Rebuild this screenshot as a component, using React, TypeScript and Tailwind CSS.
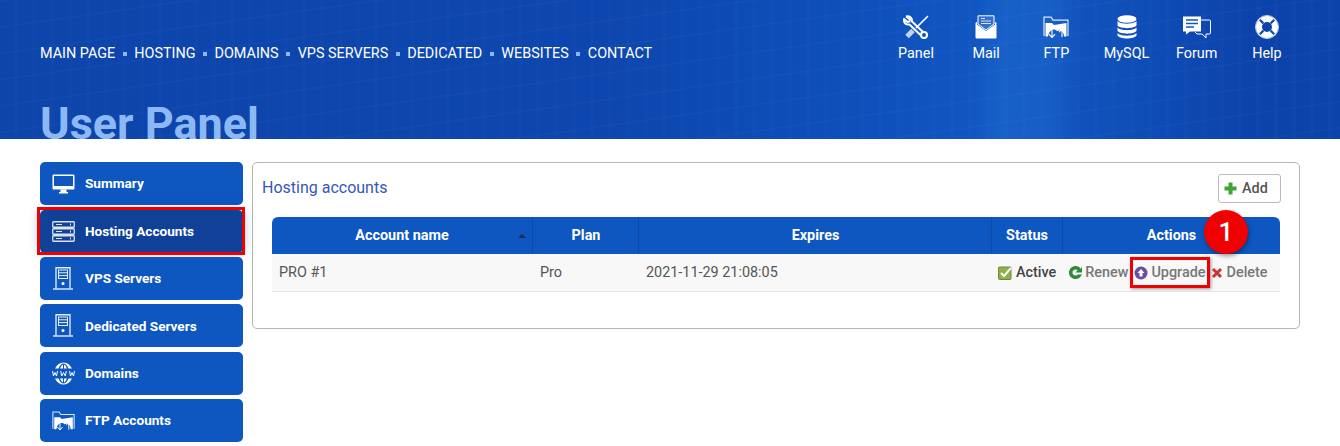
import React from 'react';

const NAV = ['MAIN PAGE', 'HOSTING', 'DOMAINS', 'VPS SERVERS', 'DEDICATED', 'WEBSITES', 'CONTACT'];

const ToolsIcon = () => (
  <svg width="26" height="24" viewBox="0 0 26 24" fill="none" stroke="white">
    <path d="M3 1.5 L7 4.5 L6.5 6.5 L4.5 7 L1 4 C0.5 8 3 10 6.5 9.5 L18 20.5" strokeWidth="2" strokeLinejoin="round" />
    <path d="M3 1.5 C6 0.5 9.5 2.5 9 6.5 L20 17" strokeWidth="2" strokeLinejoin="round" />
    <circle cx="21" cy="20" r="3" strokeWidth="2" />
    <path d="M25 1 L22.5 3.5 M22.5 3.5 L13 13" strokeWidth="1.6" />
    <path d="M10 15.5 L4 21.5" strokeWidth="5" strokeOpacity="0.75" />
  </svg>
);

const MailIcon = () => (
  <svg width="24" height="24" viewBox="0 0 24 24" fill="white">
    <path d="M4 9 V0.8 H20 V9 L12 15 Z" fill="white" fillOpacity="0.12" stroke="white" strokeWidth="1" />
    <path d="M7 3.5 H11 M7 6 H17 M7 8.5 H17" stroke="white" strokeOpacity="0.8" strokeWidth="1" />
    <path d="M1.5 8 L3 6.8 V9.5 L12 16 L21 9.5 V6.8 L22.5 8 V22.5 C22.5 23 22 23.5 21.5 23.5 H2.5 C2 23.5 1.5 23 1.5 22.5 Z" />
  </svg>
);

const FolderIcon = ({ size = 26 }: { size?: number }) => (
  <svg width={size} height={size * 0.85} viewBox="0 0 26 22" fill="none" stroke="white">
    <path d="M1 20 V1 H8 L10 4 H25 V20" strokeWidth="1.2" strokeOpacity="0.85" />
    <path d="M2.5 20.5 V7 H9 L11 9 L23.5 7 V20.5 H21 C21 16 18 13 14 15 C12 12 6 13 5 20.5 Z" fill="white" stroke="none" />
    <path d="M9 13 V21 M6 18 L9 21.5 L12 18" stroke="white" strokeWidth="1.1" />
    <path d="M19 21 V13 M16 16 L19 13 L22 16" stroke="white" strokeWidth="1.1" />
  </svg>
);

const DatabaseIcon = () => (
  <svg width="20" height="24" viewBox="0 0 20 24" fill="white">
    <ellipse cx="10" cy="4" rx="9.5" ry="3.8" />
    <path d="M0.5 6 C3 9.5 17 9.5 19.5 6 V10.5 C17 14 3 14 0.5 10.5 Z" />
    <path d="M0.5 12.5 C3 16 17 16 19.5 12.5 V16 C17 19.5 3 19.5 0.5 16 Z" />
    <path d="M0.5 18 C3 21.5 17 21.5 19.5 18 V20.5 C17 24.5 3 24.5 0.5 20.5 Z" />
  </svg>
);

const ForumIcon = () => (
  <svg width="29" height="23" viewBox="0 0 29 23" fill="none" stroke="white">
    <path d="M19 4 H27.5 C28 4 28.5 4.5 28.5 5 V17 C28.5 17.5 28 18 27.5 18 H24 V22 L20 18 H15 L13 16" strokeWidth="1" />
    <path d="M1 0.5 H19 V15.5 H8 L4 18.5 V15.5 H1 Z" fill="white" stroke="none" />
    <path d="M4 4 H16 M4 7.5 H16 M4 11 H12" stroke="#1258b8" strokeWidth="1.6" />
  </svg>
);

const LifebuoyIcon = () => (
  <svg width="24" height="24" viewBox="0 0 24 24" fill="none">
    <circle cx="12" cy="12" r="8" stroke="white" strokeWidth="6" />
    <circle cx="12" cy="12" r="11.5" stroke="white" strokeWidth="0.8" />
    <path d="M4.8 4.8 L8.4 8.4 M19.2 4.8 L15.6 8.4 M4.8 19.2 L8.4 15.6 M19.2 19.2 L15.6 15.6" stroke="#0e4cb2" strokeWidth="2.2" />
  </svg>
);

const MonitorIcon = () => (
  <svg width="23" height="20" viewBox="0 0 23 20" fill="white">
    <path fillRule="evenodd" d="M2 0.5 H21 C22 0.5 22.5 1 22.5 2 V14 C22.5 15 22 15.5 21 15.5 H2 C1 15.5 0.5 15 0.5 14 V2 C0.5 1 1 0.5 2 0.5 Z M2 2 V12 H21 V2 Z" />
    <path d="M8.5 15.5 H14.5 V18 H16 V19.5 H7 V18 H8.5 Z" />
  </svg>
);

const RackIcon = () => (
  <svg width="23" height="21" viewBox="0 0 23 21" fill="none" stroke="white" strokeOpacity="0.85">
    <rect x="0.75" y="0.75" width="21.5" height="5.5" rx="0.8" strokeWidth="1.3" />
    <rect x="0.75" y="7.75" width="21.5" height="5.5" rx="0.8" strokeWidth="1.3" />
    <rect x="0.75" y="14.75" width="21.5" height="5.5" rx="0.8" strokeWidth="1.3" />
    <path d="M4 3.5 H10 M4 10.5 H10 M4 17.5 H10 M18.5 2.5 V4.5 M18.5 9.5 V11.5 M18.5 16.5 V18.5" strokeWidth="1" />
  </svg>
);

const ServerIcon = () => (
  <svg width="20" height="23" viewBox="0 0 20 23" fill="none" stroke="white" strokeOpacity="0.9">
    <path d="M3 21.5 V0.75 H17 V21.5" strokeWidth="1.3" />
    <path d="M0 22 H20" strokeWidth="1.4" />
    <rect x="5.5" y="3" width="9" height="8.5" strokeWidth="1" />
    <path d="M5.5 5.8 H14.5 M5.5 8.6 H14.5" strokeWidth="1" />
    <circle cx="10" cy="16.5" r="1.5" fill="white" stroke="none" />
  </svg>
);

const GlobeIcon = () => (
  <svg width="23" height="23" viewBox="0 0 23 23" fill="white">
    <path d="M3 6.5 C5 2.5 8 0.5 11.5 0.5 C15 0.5 18 2.5 20 6.5 H16.5 C15.5 3.5 13.5 1.5 11.5 1.5 C9.5 1.5 7.5 3.5 6.5 6.5 Z" />
    <path d="M3 16.5 C5 20.5 8 22.5 11.5 22.5 C15 22.5 18 20.5 20 16.5 H16.5 C15.5 19.5 13.5 21.5 11.5 21.5 C9.5 21.5 7.5 19.5 6.5 16.5 Z" />
    <path d="M8 6.5 C9 4 10 3 11 2.5 V6.5 Z M15 6.5 C14 4 13 3 12 2.5 V6.5 Z M8 16.5 C9 19 10 20 11 20.5 V16.5 Z M15 16.5 C14 19 13 20 12 20.5 V16.5 Z" />
    <path d="M0.5 9 L1.5 14 L3 10.5 L4.5 14 L5.5 9 M8.7 9 L9.7 14 L11.5 10.5 L13.3 14 L14.3 9 M17.5 9 L18.5 14 L20 10.5 L21.5 14 L22.5 9" fill="none" stroke="white" strokeWidth="1" />
  </svg>
);

const SIDEBAR = [
  { label: 'Summary', icon: <MonitorIcon /> },
  { label: 'Hosting Accounts', icon: <RackIcon />, active: true },
  { label: 'VPS Servers', icon: <ServerIcon /> },
  { label: 'Dedicated Servers', icon: <ServerIcon /> },
  { label: 'Domains', icon: <GlobeIcon /> },
  { label: 'FTP Accounts', icon: <FolderIcon size={23} /> },
];

const TOP_LINKS = [
  { label: 'Panel', icon: <ToolsIcon /> },
  { label: 'Mail', icon: <MailIcon /> },
  { label: 'FTP', icon: <FolderIcon /> },
  { label: 'MySQL', icon: <DatabaseIcon /> },
  { label: 'Forum', icon: <ForumIcon /> },
  { label: 'Help', icon: <LifebuoyIcon /> },
];

export default function App() {
  return (
    <div className="h-[446px] overflow-hidden bg-white font-['Roboto',sans-serif]">
      {/* Header */}
      <header className="h-[139px] overflow-hidden bg-[repeating-linear-gradient(172deg,rgba(255,255,255,0.02)_0px,rgba(255,255,255,0.02)_2px,transparent_2px,transparent_26px),linear-gradient(92deg,transparent_975px,rgba(50,135,225,0.2)_1005px,rgba(50,135,225,0.2)_1050px,transparent_1085px),repeating-linear-gradient(90deg,transparent_0px,transparent_14px,rgba(255,255,255,0.012)_14px,rgba(255,255,255,0.012)_18px),linear-gradient(90deg,#0d45ab_0px,#0d46ae_600px,#0e4fba_850px,#1157c2_1000px,#0f4fb8_1120px,#0c43ab_1250px)] px-10">
        <div className="flex items-start justify-between">
          <nav className="mt-[45px] flex h-[18px] items-center text-[14.4px] leading-[18px] text-white">
            {NAV.map((item, i) => (
              <React.Fragment key={item}>
                {i > 0 && <span className="mx-[7.5px] h-1 w-1 bg-[#8ab8f4]" />}
                <span>{item}</span>
              </React.Fragment>
            ))}
          </nav>
          <div className="mt-[15px] mr-[-2px] flex">
            {TOP_LINKS.map((link) => (
              <div key={link.label} className="flex w-[70.2px] flex-col items-center text-[14.4px] leading-[18px] text-white">
                <div className="flex h-[24px] items-center justify-center">{link.icon}</div>
                <span className="mt-[6px]">{link.label}</span>
              </div>
            ))}
          </div>
        </div>
        <h1 className="mt-[35px] text-[45px] leading-[52px] font-bold text-[#8cb9f5]">User Panel</h1>
      </header>

      <div className="flex gap-[9px] px-10 pt-[23.2px]">
        {/* Sidebar */}
        <aside className="flex w-[203px] shrink-0 flex-col gap-[4.4px]">
          {SIDEBAR.map((item) => (
            <div
              key={item.label}
              className={`relative flex h-[43px] items-center rounded-[5px] text-[13.6px] font-bold text-white ${
                item.active ? 'bg-[#104098] shadow-[0_0_12px_rgba(16,64,152,0.35)]' : 'bg-[#0e57c0]'
              }`}
            >
              <div className="flex w-[45px] justify-center pl-[1px]">{item.icon}</div>
              <span>{item.label}</span>
              {item.active && (
                <div className="absolute top-[-3px] right-[-2px] bottom-[-2px] left-[-3px] border-[3px] border-[#f00000]" />
              )}
            </div>
          ))}
        </aside>

        {/* Main panel */}
        <main className="h-[167px] w-[1048px] rounded-[5px] border border-[#b5b5b5] pt-[11px]">
          <div className="flex items-center justify-between pr-[18px] pl-[9px]">
            <h2 className="mt-[-2px] text-base leading-[28px] text-[#3557bb]">Hosting accounts</h2>
            <button className="flex h-[29px] w-[63px] items-center gap-[5px] rounded-[3px] border border-[#bbbbbb] bg-white pl-[5px] text-[14.4px] font-medium text-[#555555]">
              <svg width="13" height="13" viewBox="0 0 13 13">
                <path d="M4.5 0.5 H8.5 V4.5 H12.5 V8.5 H8.5 V12.5 H4.5 V8.5 H0.5 V4.5 H4.5 Z" fill="#3fa535" />
              </svg>
              Add
            </button>
          </div>

          <div className="relative mx-[19px] mt-[14px]">
            {/* Table head */}
            <div className="flex h-[37px] items-center rounded-t-[6px] bg-[#0e57c0] text-[14.4px] font-bold text-white">
              <div className="relative flex h-full w-[261px] items-center justify-center border-r border-[#0c4aa6]">
                Account name
                <span className="absolute top-[17px] right-[6px] h-0 w-0 border-x-[4px] border-b-[4px] border-x-transparent border-b-[#1f2a44]" />
              </div>
              <div className="flex h-full w-[106px] items-center justify-center border-r border-[#0c4aa6] pl-[1px]">Plan</div>
              <div className="flex h-full w-[353px] items-center justify-center border-r border-[#0c4aa6] pl-[1px]">Expires</div>
              <div className="flex h-full w-[71px] items-center justify-center border-r border-[#0c4aa6]">Status</div>
              <div className="flex h-full flex-1 items-center justify-center">Actions</div>
            </div>

            {/* Row */}
            <div className="flex h-[38px] items-center border-b border-[#e6e6e6] bg-[#f8f8f8] text-[14.4px] text-[#555555]">
              <div className="w-[261px] pl-[7px]">PRO #1</div>
              <div className="w-[106px] pl-[7px]">Pro</div>
              <div className="w-[353px] pl-[7px]">2021-11-29 21:08:05</div>
              <div className="flex flex-1 items-center pl-[6px] font-medium">
                <span className="flex items-center gap-[4px] text-[#444444]">
                  <svg width="14" height="14" viewBox="0 0 14 14">
                    <rect x="0.5" y="1" width="12.5" height="12.5" rx="1" fill="#8fb04a" stroke="#6d8a35" />
                    <path d="M3 7 L6 10 L13 2" fill="none" stroke="white" strokeWidth="2" />
                  </svg>
                  Active
                </span>
                <span className="ml-[12px] flex items-center gap-[2px] text-[#777777]">
                  <svg width="15" height="15" viewBox="0 0 15 15">
                    <path d="M13 4 C11.5 1.5 9 0.5 6.5 1 C3 1.8 0.8 4.8 1 8 C1.2 11.5 4.2 14 7.5 14 C10.5 14 13 12 13.8 9.5 H9.8 C9.2 10.3 8.4 10.6 7.5 10.6 C5.8 10.6 4.5 9.3 4.5 7.5 C4.5 5.7 5.8 4.4 7.5 4.4 C8.4 4.4 9 4.7 9.6 5.3 L7.5 7.5 H14 V1 Z" fill="#2e8b3a" />
                  </svg>
                  Renew
                </span>
                <span className="ml-[6px] flex items-center gap-[3px] text-[#777777]">
                  <svg width="14" height="14" viewBox="0 0 14 14">
                    <circle cx="7" cy="7" r="6.5" fill="#6a4fa0" />
                    <path d="M7 3 L10.5 7 H8.5 V10.5 H5.5 V7 H3.5 Z" fill="white" />
                  </svg>
                  Upgrade
                </span>
                <span className="ml-[5px] flex items-center gap-[4px] text-[#777777]">
                  <svg width="12" height="12" viewBox="0 0 12 12">
                    <path d="M2 2 L10 10 M10 2 L2 10" stroke="#cf3434" strokeWidth="3" />
                  </svg>
                  Delete
                </span>
              </div>
            </div>

            {/* Annotations */}
            <div className="absolute top-[40px] left-[858px] h-[31px] w-[80px] border-[3px] border-[#f00000] shadow-[1px_1px_3px_rgba(0,0,0,0.4)]" />
            <div className="absolute top-[-7px] left-[932px] flex h-[44px] w-[44px] items-center justify-center rounded-full bg-[#f00000] text-[26px] font-medium text-white shadow-[1px_2px_4px_rgba(0,0,0,0.4)]">
              1
            </div>
          </div>
        </main>
      </div>
    </div>
  );
}
